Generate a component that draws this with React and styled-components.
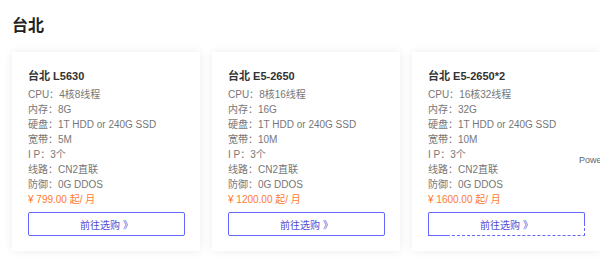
import styled, { createGlobalStyle, css } from 'styled-components';

const GlobalStyle = createGlobalStyle`
  html, body {
    margin: 0;
    padding: 0;
    background: #fff;
    overflow: hidden;
  }
  body {
    font-family: 'Liberation Sans', Arial, 'Noto Sans CJK SC', sans-serif;
    width: 600px;
    height: 258px;
  }
`;

const Page = styled.div`
  position: relative;
  width: 600px;
  height: 258px;
  padding: 14px 0 0 12px;
  box-sizing: border-box;
`;

const Region = styled.h2`
  margin: 0 0 14px;
  font-size: 16px;
  line-height: 24px;
  font-weight: 700;
  color: #222;
`;

const Grid = styled.div`
  display: grid;
  grid-template-columns: repeat(3, 188px);
  gap: 12px;
`;

const Card = styled.div`
  background: #fff;
  box-shadow: 0 0 9px rgba(0, 0, 0, 0.08);
  padding: 15px 16px 15px 16px;
  box-sizing: border-box;
`;

const Name = styled.h3`
  margin: 0 0 2px;
  font-size: 11px;
  line-height: 18px;
  font-weight: 700;
  color: #333;
`;

const Spec = styled.p`
  margin: 0;
  font-size: 10px;
  line-height: 15px;
  color: #777;
  white-space: nowrap;
`;

const Price = styled(Spec)`
  color: #ff7a2d;
`;

const BuyBtn = styled.button`
  position: relative;
  display: block;
  width: 157px;
  height: 24px;
  margin-top: 5px;
  padding: 0;
  background: #fff;
  border: 1px solid #6464ff;
  border-radius: 2px;
  color: #4e4ed8;
  font-family: inherit;
  font-size: 10px;
  cursor: pointer;

  ${(p) =>
    p.$broken &&
    css`
      border-bottom-style: dashed;
      &::before {
        content: '';
        position: absolute;
        left: -1px;
        bottom: -1px;
        width: 19px;
        border-bottom: 1px solid #6464ff;
      }
      &::after {
        content: '';
        position: absolute;
        right: -1px;
        top: 10px;
        bottom: -1px;
        border-right: 1px dashed #6464ff;
        background: #fff;
        width: 0;
      }
    `}
`;

const Powered = styled.span`
  position: absolute;
  left: 579px;
  top: 153px;
  font-size: 9px;
  line-height: 14px;
  color: #666;
  white-space: nowrap;
`;

const plans = [
  { name: '台北 L5630', cpu: '4核8线程', ram: '8G', bw: '5M', price: '799.00' },
  { name: '台北 E5-2650', cpu: '8核16线程', ram: '16G', bw: '10M', price: '1200.00' },
  { name: '台北 E5-2650*2', cpu: '16核32线程', ram: '32G', bw: '10M', price: '1600.00', broken: true },
];

export default function App() {
  return (
    <>
      <GlobalStyle />
      <Page>
        <Region>台北</Region>
        <Grid>
          {plans.map((p) => (
            <Card key={p.name}>
              <Name>{p.name}</Name>
              <Spec>CPU：{p.cpu}</Spec>
              <Spec>内存：{p.ram}</Spec>
              <Spec>硬盘：1T HDD or 240G SSD</Spec>
              <Spec>宽带：{p.bw}</Spec>
              <Spec>I P：3个</Spec>
              <Spec>线路：CN2直联</Spec>
              <Spec>防御：0G DDOS</Spec>
              <Price>¥ {p.price} 起/ 月</Price>
              <BuyBtn $broken={p.broken}>前往选购 》</BuyBtn>
            </Card>
          ))}
        </Grid>
        <Powered>Powe</Powered>
      </Page>
    </>
  );
}
